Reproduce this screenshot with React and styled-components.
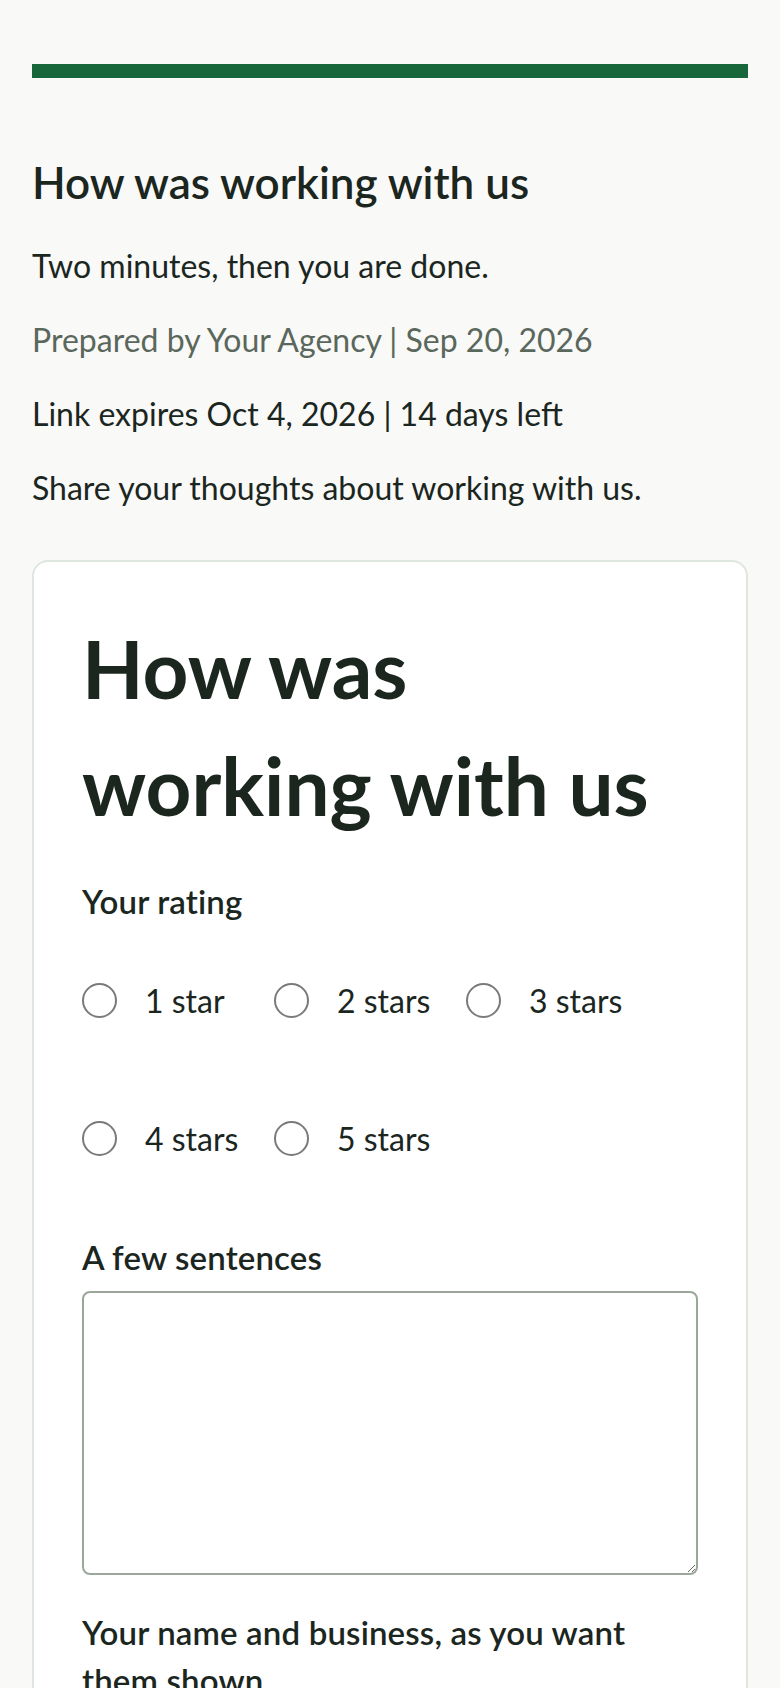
import styled, { createGlobalStyle } from "styled-components";

const GlobalStyle = createGlobalStyle`
	* {
		box-sizing: border-box;
	}
	body {
		margin: 0;
		background: #f9f9f7;
		color: #1b261f;
		font-family: Lato, "Noto Sans", sans-serif;
	}
`;

const ratings = ["1 star", "2 stars", "3 stars", "4 stars", "5 stars"];

const App = () => {
	return (
		<Page>
			<GlobalStyle />
			<AccentBar />
			<Intro>
				<h1>How was working with us</h1>
				<p>Two minutes, then you are done.</p>
				<p className="muted">Prepared by Your Agency | Sep 20, 2026</p>
				<p>Link expires Oct 4, 2026 | 14 days left</p>
				<p>Share your thoughts about working with us.</p>
			</Intro>
			<Card>
				<CardTitle>How was working with us</CardTitle>
				<Form onSubmit={(e) => e.preventDefault()}>
					<Fieldset>
						<Label as="legend">Your rating</Label>
						<RadioGrid>
							{ratings.map((r, i) => (
								<RadioItem key={r}>
									<input type="radio" name="rating" value={i + 1} />
									<span>{r}</span>
								</RadioItem>
							))}
						</RadioGrid>
					</Fieldset>
					<Field>
						<Label htmlFor="quote">A few sentences</Label>
						<TextArea id="quote" />
					</Field>
					<Field $top={33}>
						<Label htmlFor="name">Your name and business, as you want them shown</Label>
						<TextInput id="name" type="text" />
					</Field>
					<Submit type="submit">Send</Submit>
				</Form>
			</Card>
		</Page>
	);
};

const Page = styled.main`
	padding: 64px 32px 64px;
`;

const AccentBar = styled.div`
	height: 14px;
	background: #17673a;
`;

const Intro = styled.header`
	margin-top: 78px;
	display: flex;
	flex-direction: column;
	gap: 26px;
	h1 {
		margin: 0 0 7px;
		font-size: 44px;
		font-weight: 600;
		line-height: 1.2;
	}
	p {
		margin: 0;
		font-size: 32px;
		line-height: 48px;
	}
	.muted {
		color: #5a675c;
	}
`;

const Card = styled.section`
	margin-top: 48px;
	background: #fff;
	border: 2px solid #dfe5df;
	border-radius: 16px;
	padding: 48px;
`;

const CardTitle = styled.h2`
	margin: 0;
	font-size: 80px;
	font-weight: 700;
	line-height: 117px;
`;

const Form = styled.form`
	margin-top: 33px;
	display: flex;
	flex-direction: column;
`;

const Fieldset = styled.fieldset`
	margin: 0;
	padding: 0;
	border: 0;
	min-width: 0;
`;

const Label = styled.label`
	display: block;
	padding: 0;
	font-size: 33px;
	font-weight: 600;
	letter-spacing: 0.15px;
	line-height: 48px;
`;

const RadioGrid = styled.div`
	margin-top: 32px;
	display: flex;
	flex-wrap: wrap;
	column-gap: 32px;
	row-gap: 50px;
`;

const RadioItem = styled.label`
	width: 160px;
	min-height: 88px;
	display: flex;
	align-items: center;
	gap: 28px;
	font-size: 32px;
	line-height: 48px;
	input {
		appearance: none;
		margin: 0;
		flex: none;
		width: 35px;
		height: 35px;
		border: 2px solid #7a7a7a;
		border-radius: 50%;
		background: #fff;
	}
	input:checked {
		border-color: #17673a;
		box-shadow: inset 0 0 0 7px #fff;
		background: #17673a;
	}
`;

const Field = styled.div`
	margin-top: ${(p) => p.$top ?? 50}px;
	display: flex;
	flex-direction: column;
	gap: 10px;
`;

const TextArea = styled.textarea`
	width: 100%;
	height: 284px;
	border: 2px solid #9aa79a;
	border-radius: 8px;
	padding: 16px;
	font: inherit;
	font-size: 32px;
	resize: vertical;
	background: #fff;
`;

const TextInput = styled.input`
	width: 100%;
	height: 88px;
	border: 2px solid #9aa79a;
	border-radius: 8px;
	padding: 0 16px;
	font: inherit;
	font-size: 32px;
`;

const Submit = styled.button`
	margin-top: 48px;
	align-self: flex-start;
	padding: 20px 40px;
	border: 0;
	border-radius: 8px;
	background: #17673a;
	color: #fff;
	font: inherit;
	font-size: 32px;
	font-weight: 600;
`;

export default App;
